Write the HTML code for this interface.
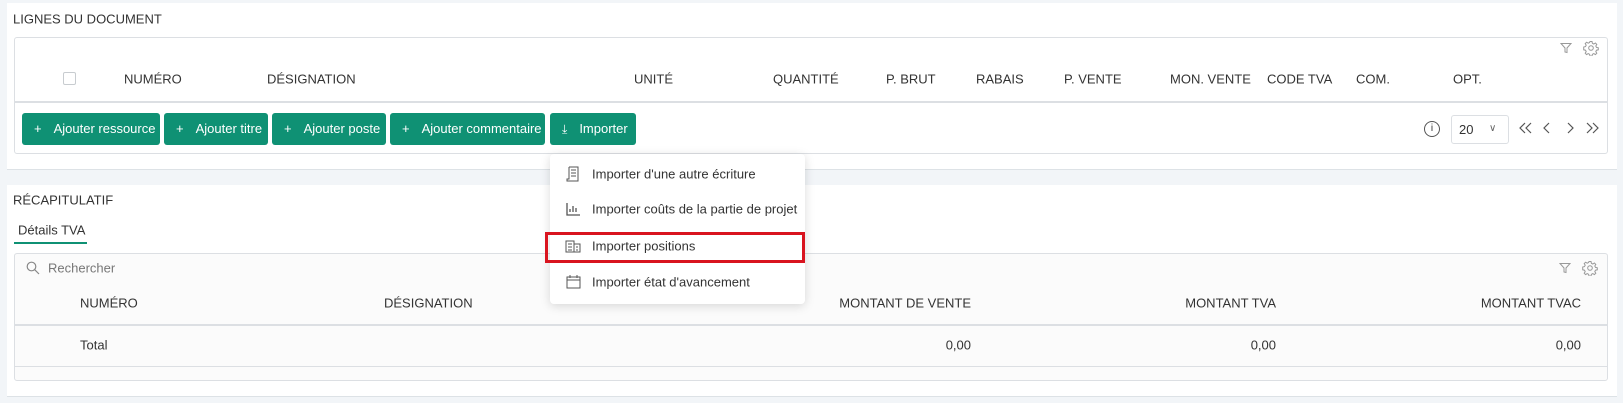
<!DOCTYPE html>
<html><head><meta charset="utf-8"><style>
*{box-sizing:border-box;margin:0;padding:0}
body{width:1623px;height:403px;background:#f2f5f8;font-family:"Liberation Sans",sans-serif;font-size:13px;color:#333;position:relative;overflow:hidden}
.a{position:absolute;white-space:nowrap}
.panel{position:absolute;background:#fff;border-bottom:1px solid #dde2e6}
.box{position:absolute;border:1px solid #dcdfe3;border-radius:3px;background:#fff}
.h{transform:translateY(-50%)}
.btn{position:absolute;top:113px;height:32px;background:#0f9174;color:#fff;border-radius:3px;line-height:32px;font-size:13px;padding-left:12px}
.btn b{font-weight:normal;margin-right:12px}
.r{transform:translate(-100%,-50%)}
</style></head><body>
<div class="panel" style="left:7px;top:3px;width:1610px;height:167px"></div>
<div class="a h" style="left:13px;top:19px">LIGNES DU DOCUMENT</div>
<div class="box" style="left:14px;top:37px;width:1594px;height:117px"></div>
<div class="a" style="left:14px;top:101px;width:1594px;height:2px;background:#dcdfe3"></div>
<div class="a" style="left:63px;top:72px;width:13px;height:13px;border:1px solid #c8ccd0;border-radius:2px"></div>
<div class="a h" style="left:124px;top:79px">NUMÉRO</div>
<div class="a h" style="left:267px;top:79px">DÉSIGNATION</div>
<div class="a h" style="left:634px;top:79px">UNITÉ</div>
<div class="a h" style="left:773px;top:79px">QUANTITÉ</div>
<div class="a h" style="left:886px;top:79px">P. BRUT</div>
<div class="a h" style="left:976px;top:79px">RABAIS</div>
<div class="a h" style="left:1064px;top:79px">P. VENTE</div>
<div class="a h" style="left:1170px;top:79px">MON. VENTE</div>
<div class="a h" style="left:1267px;top:79px">CODE TVA</div>
<div class="a h" style="left:1356px;top:79px">COM.</div>
<div class="a h" style="left:1453px;top:79px">OPT.</div>
<svg class="a" style="left:1560px;top:42px" width="12" height="12" viewBox="0 0 12 12" fill="none" stroke="#999"><path d="M1 1.5h10L7 6v4.5L5 10V6z"/></svg>
<svg class="a" style="left:1583px;top:40px" width="16" height="16" viewBox="0 0 16 16" fill="none" stroke="#999"><circle cx="8" cy="8" r="2.3"/><path d="M7 1.5h2l.4 1.8 1.4.7 1.6-1 1.4 1.4-1 1.6.7 1.4 1.8.4v2l-1.8.4-.7 1.4 1 1.6-1.4 1.4-1.6-1-1.4.7-.4 1.8H7l-.4-1.8-1.4-.7-1.6 1-1.4-1.4 1-1.6-.7-1.4-1.8-.4V7l1.8-.4.7-1.4-1-1.6 1.4-1.4 1.6 1 1.4-.7z"/></svg>
<div class="btn" style="left:22px;width:138px"><b>+</b>Ajouter ressource</div>
<div class="btn" style="left:164px;width:104px"><b>+</b>Ajouter titre</div>
<div class="btn" style="left:272px;width:114px"><b>+</b>Ajouter poste</div>
<div class="btn" style="left:390px;width:155px"><b>+</b>Ajouter commentaire</div>
<div class="btn" style="left:550px;width:86px"><b style="font-size:12px">⤓</b>Importer</div>
<div class="a" style="left:1424px;top:121px;width:16px;height:16px;border:1px solid #555;border-radius:50%;font-size:10px;text-align:center;line-height:14px">i</div>
<div class="a" style="left:1451px;top:115px;width:58px;height:29px;border:1px solid #dcdfe3;border-radius:3px;line-height:27px;padding-left:7px">20<span style="position:absolute;left:37px;top:-1px;color:#666;font-size:10px">&#8744;</span></div>
<svg class="a" style="left:1518px;top:122px" width="82" height="12" viewBox="0 0 82 12" fill="none" stroke="#555" stroke-width="1.2"><path d="M7 1L2 6l5 5M13 1L8 6l5 5M31 1l-5 5 5 5M50 1l5 5-5 5M69 1l5 5-5 5M75 1l5 5-5 5"/></svg>

<div class="panel" style="left:7px;top:185px;width:1610px;height:212px"></div>
<div class="a h" style="left:13px;top:200px">RÉCAPITULATIF</div>
<div class="a h" style="left:18px;top:230px">Détails TVA</div>
<div class="a" style="left:14px;top:242px;width:73px;height:2px;background:#0f9174"></div>
<div class="box" style="left:14px;top:253px;width:1594px;height:128px;background:#fbfbfb"></div>
<div class="a" style="left:14px;top:324px;width:1594px;height:2px;background:#dcdfe3"></div>
<div class="a" style="left:14px;top:366px;width:1594px;height:1px;background:#dcdfe3"></div>
<svg class="a" style="left:26px;top:261px" width="14" height="14" viewBox="0 0 14 14" fill="none" stroke="#888" stroke-width="1.2"><circle cx="5.5" cy="5.5" r="4.3"/><path d="M8.7 8.7L13 13"/></svg>
<div class="a h" style="left:48px;top:268px;color:#777">Rechercher</div>
<svg class="a" style="left:1559px;top:262px" width="12" height="12" viewBox="0 0 12 12" fill="none" stroke="#999"><path d="M1 1.5h10L7 6v4.5L5 10V6z"/></svg>
<svg class="a" style="left:1582px;top:260px" width="16" height="16" viewBox="0 0 16 16" fill="none" stroke="#999"><circle cx="8" cy="8" r="2.3"/><path d="M7 1.5h2l.4 1.8 1.4.7 1.6-1 1.4 1.4-1 1.6.7 1.4 1.8.4v2l-1.8.4-.7 1.4 1 1.6-1.4 1.4-1.6-1-1.4.7-.4 1.8H7l-.4-1.8-1.4-.7-1.6 1-1.4-1.4 1-1.6-.7-1.4-1.8-.4V7l1.8-.4.7-1.4-1-1.6 1.4-1.4 1.6 1 1.4-.7z"/></svg>
<div class="a h" style="left:80px;top:303px">NUMÉRO</div>
<div class="a h" style="left:384px;top:303px">DÉSIGNATION</div>
<div class="a r" style="left:971px;top:303px">MONTANT DE VENTE</div>
<div class="a r" style="left:1276px;top:303px">MONTANT TVA</div>
<div class="a r" style="left:1581px;top:303px">MONTANT TVAC</div>
<div class="a h" style="left:80px;top:345px">Total</div>
<div class="a r" style="left:971px;top:345px">0,00</div>
<div class="a r" style="left:1276px;top:345px">0,00</div>
<div class="a r" style="left:1581px;top:345px">0,00</div>

<div class="a" style="left:550px;top:154px;width:255px;height:150px;background:#fff;border-radius:4px;box-shadow:0 2px 10px rgba(0,0,0,.15)"></div>
<svg class="a" style="left:566px;top:166px" width="14" height="16" viewBox="0 0 14 16" fill="none" stroke="#555"><path d="M3 1h9v12M3 1v12H1v2h11v-2M5 4h5M5 7h5M5 10h5"/></svg>
<div class="a h" style="left:592px;top:174px">Importer d'une autre écriture</div>
<svg class="a" style="left:566px;top:202px" width="15" height="14" viewBox="0 0 15 14" fill="none" stroke="#555" stroke-width="1.3"><path d="M1 1v12h13M4 10V7M7 10V4M10 10V6"/></svg>
<div class="a h" style="left:592px;top:209px">Importer coûts de la partie de projet</div>
<svg class="a" style="left:565px;top:240px" width="16" height="13" viewBox="0 0 16 13" fill="none" stroke="#555"><path d="M1 1h8v11H1zM9 4h6v8H9M3 4h4M3 7h4M3 10h4M11 7h2M11 10h2"/></svg>
<div class="a h" style="left:592px;top:246px">Importer positions</div>
<svg class="a" style="left:566px;top:274px" width="15" height="15" viewBox="0 0 15 15" fill="none" stroke="#555"><path d="M1 3h13v11H1zM1 6h13M4 1v3M11 1v3"/></svg>
<div class="a h" style="left:592px;top:282px">Importer état d'avancement</div>
<div class="a" style="left:545px;top:232px;width:260px;height:31px;border:3px solid #d9141f"></div>
</body></html>
